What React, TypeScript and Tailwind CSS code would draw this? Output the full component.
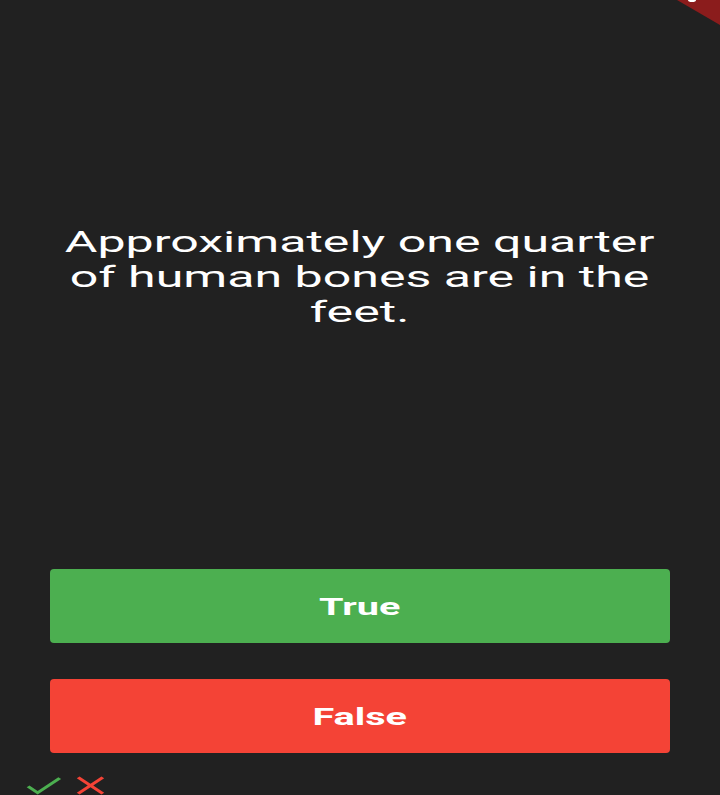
const CheckIcon = () => (
  <svg viewBox="0 0 24 24" width="47" height="31" preserveAspectRatio="none" className="block">
    <path d="M9 16.17L4.83 12l-1.42 1.41L9 19 21 7l-1.41-1.41z" fill="#4caf50" />
  </svg>
);

const CloseIcon = () => (
  <svg viewBox="0 0 24 24" width="47" height="31" preserveAspectRatio="none" className="block">
    <path
      d="M19 6.41L17.59 5 12 10.59 6.41 5 5 6.41 10.59 12 5 17.59 6.41 19 12 13.41 17.59 19 19 17.59 13.41 12z"
      fill="#f44336"
    />
  </svg>
);

const DebugBanner = () => (
  <svg width="60" height="30" viewBox="0 0 60 30" className="absolute right-0 top-0">
    <polygon points="17,0 60,25 60,0" fill="#8b1c1c" />
    <ellipse cx="32" cy="0" rx="4" ry="2" fill="#ffffff" />
  </svg>
);

function App() {
  return (
    <div className="relative h-[795px] w-[720px] overflow-hidden bg-[#212121] font-['Roboto',sans-serif]">
      <DebugBanner />
      <div className="flex h-[552px] items-center justify-center px-[50px]">
        <p className="origin-center scale-x-[1.67] whitespace-nowrap text-center text-[30px] leading-[35px] text-white">
          Approximately one quarter
          <br />
          of human bones are in the
          <br />
          feet.
        </p>
      </div>
      <div className="mt-[17px] flex flex-col gap-[36px] px-[50px]">
        <button className="flex h-[74px] items-center justify-center rounded-[4px] bg-[#4caf50]">
          <span className="mt-[1px] scale-x-[1.65] text-[24px] font-bold text-white">True</span>
        </button>
        <button className="flex h-[74px] items-center justify-center rounded-[4px] bg-[#f44336]">
          <span className="mt-[1px] scale-x-[1.65] text-[24px] font-bold text-white">False</span>
        </button>
      </div>
      <div className="ml-[20px] mt-[17px] flex">
        <CheckIcon />
        <CloseIcon />
      </div>
    </div>
  );
}

export default App;
